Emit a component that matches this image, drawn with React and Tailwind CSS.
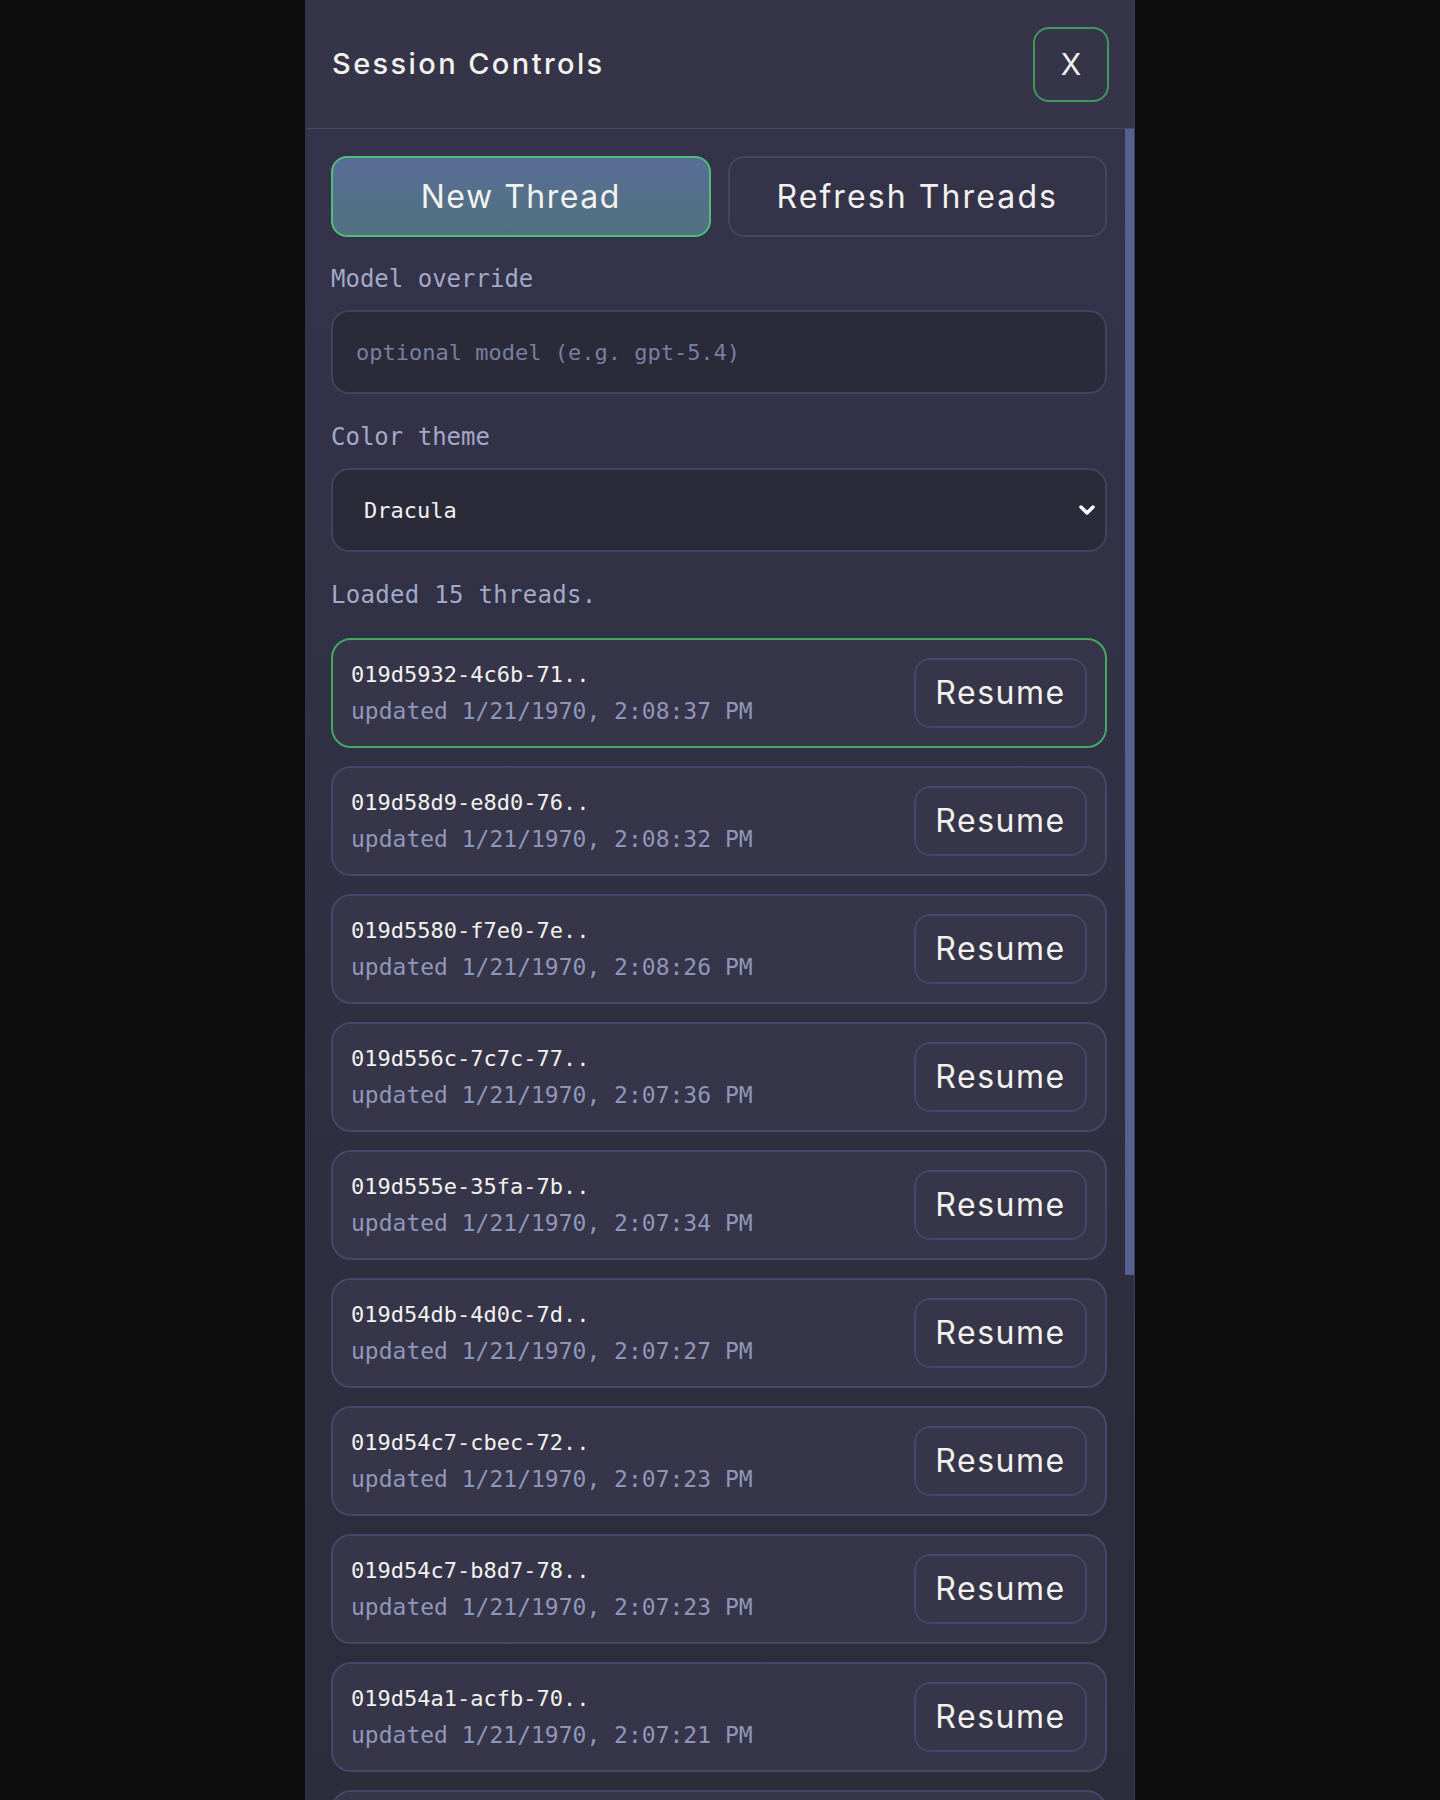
import React from 'react'
import { ChevronDown } from 'lucide-react'

const threads = [
  ['019d5932-4c6b-71..', '2:08:37 PM'],
  ['019d58d9-e8d0-76..', '2:08:32 PM'],
  ['019d5580-f7e0-7e..', '2:08:26 PM'],
  ['019d556c-7c7c-77..', '2:07:36 PM'],
  ['019d555e-35fa-7b..', '2:07:34 PM'],
  ['019d54db-4d0c-7d..', '2:07:27 PM'],
  ['019d54c7-cbec-72..', '2:07:23 PM'],
  ['019d54c7-b8d7-78..', '2:07:23 PM'],
  ['019d54a1-acfb-70..', '2:07:21 PM'],
  ['019d5493-2f1a-74..', '2:07:18 PM'],
  ['019d5470-9be2-7a..', '2:07:11 PM'],
  ['019d5452-61cd-79..', '2:07:04 PM'],
  ['019d5431-0a8e-73..', '2:06:58 PM'],
  ['019d5418-d4b7-7c..', '2:06:51 PM'],
  ['019d53f6-8c21-75..', '2:06:45 PM'],
]

const mono = "font-['DejaVu_Sans_Mono','Liberation_Mono',monospace]"
const sans = "font-['Inter','Noto_Sans',sans-serif]"

function ThreadRow({ id, time, active }) {
  return (
    <div
      className={`shrink-0 flex items-center justify-between h-[110px] pl-[18px] pr-[18px] rounded-[20px] border-2 bg-[#373549] ${
        active ? 'border-[#45a862]' : 'border-[#43476a]'
      }`}
    >
      <div className="flex flex-col gap-[10px]">
        <span className={`${mono} text-[22px] leading-[26px] text-[#f2f2ee]`}>{id}</span>
        <span className={`${mono} text-[23px] leading-[26px] text-[#8f97b9]`}>updated 1/21/1970, {time}</span>
      </div>
      <button className={`${sans} h-[70px] w-[173px] rounded-[16px] border-2 border-[#43476a] bg-[#373549] text-[32px] tracking-[1.5px] text-[#f2f2ee]`}>
        Resume
      </button>
    </div>
  )
}

export default function App() {
  return (
    <div className="min-h-screen bg-[#0c0c0c] flex justify-center">
      <aside className="w-[830px] h-[1800px] flex flex-col bg-[#34334a] border-l border-l-[#33324a] border-r border-r-[#3d3f5a] overflow-hidden">
        {/* Header */}
        <header className="h-[129px] shrink-0 flex items-center justify-between pl-[26px] pr-[25px] border-b-[1.5px] border-[#464b6d] bg-[#363448]">
          <h2 className={`${sans} text-[29px] font-medium tracking-[2.4px] text-[#f2f2ee]`}>Session Controls</h2>
          <button className={`${sans} w-[76px] h-[75px] rounded-[16px] border-2 border-[#3d9a5c] text-[30px] text-[#f2f2ee]`}>
            X
          </button>
        </header>

        {/* Body + scrollbar */}
        <div className="flex-1 min-h-0 flex bg-gradient-to-b from-[#34334a] to-[#2c2c3b]">
          <div className="flex-1 min-w-0 overflow-hidden flex flex-col pl-[25px] pr-[18px] pt-[27px] pb-[28px]">
            <div className="grid grid-cols-2 gap-[17px] shrink-0">
              <button className={`${sans} h-[81px] rounded-[16px] border-2 border-[#4dbf7a] bg-gradient-to-b from-[#586d96] to-[#52727f] text-[32px] tracking-[1.5px] text-[#f2f2ee]`}>
                New Thread
              </button>
              <button className={`${sans} h-[81px] rounded-[16px] border-2 border-[#42465f] bg-[#34334a] text-[32px] tracking-[2.1px] text-[#f2f2ee]`}>
                Refresh Threads
              </button>
            </div>

            <label className={`${mono} block mt-[27px] text-[24px] leading-[30px] text-[#a2a9c8]`}>Model override</label>
            <input
              placeholder="optional model (e.g. gpt-5.4)"
              className={`${mono} shrink-0 mt-[16px] w-full h-[84px] px-[23px] rounded-[18px] border-2 border-[#3f4361] bg-[#2a2a39] text-[22px] text-[#f2f2ee] placeholder:text-[#7880a2] outline-none`}
            />

            <label className={`${mono} block mt-[28px] text-[24px] leading-[30px] text-[#a2a9c8]`}>Color theme</label>
            <div className="relative mt-[16px] shrink-0">
              <select
                defaultValue="Dracula"
                className={`${mono} appearance-none w-full h-[84px] pl-[31px] pr-[60px] rounded-[18px] border-2 border-[#3f4361] bg-[#2a2a39] text-[22px] text-[#f2f2ee] outline-none`}
              >
                <option>Dracula</option>
                <option>Nord</option>
                <option>Solarized Dark</option>
              </select>
              <ChevronDown className="absolute right-[8px] top-1/2 -translate-y-1/2 w-[24px] h-[24px] text-white pointer-events-none" strokeWidth={3.5} />
            </div>

            <p className={`${mono} mt-[28px] text-[24px] leading-[30px] text-[#a2a9c8] tracking-[0.3px]`}>Loaded 15 threads.</p>

            <div className="mt-[28px] flex flex-col gap-[18px]">
              {threads.map(([id, time], i) => (
                <ThreadRow key={id} id={id} time={time} active={i === 0} />
              ))}
            </div>
          </div>

          {/* scrollbar */}
          <div className="w-[9px] shrink-0">
            <div className="h-[1146px] bg-[#56608e]" />
          </div>
        </div>
      </aside>
    </div>
  )
}
